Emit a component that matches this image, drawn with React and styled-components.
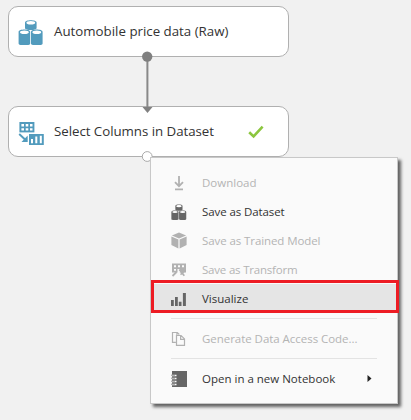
import React from "react";
import styled, { createGlobalStyle } from "styled-components";

const GlobalStyle = createGlobalStyle`
  body { margin: 0; background: #f1f1f1; font-family: "Open Sans", "Noto Sans", sans-serif; }
`;

const Canvas = styled.main`
  position: relative;
  width: 411px;
  height: 420px;
  overflow: hidden;
  background: #f1f1f1;
`;

const Node = styled.section`
  position: absolute;
  left: 8px;
  top: ${(p) => p.$top}px;
  box-sizing: border-box;
  width: 281px;
  height: 51px;
  display: flex;
  align-items: center;
  padding: 0 23px 0 9px;
  border: 1px solid #b0b0b0;
  border-radius: 10px;
  background: #fff;
`;

const NodeIcon = styled.svg`
  flex: none;
  width: 26px;
  height: 27px;
  margin-right: 10px;
`;

const NodeLabel = styled.span`
  flex: 1;
  padding-bottom: 2px;
  white-space: nowrap;
  font-size: 13.3px;
  line-height: 20px;
  letter-spacing: ${(p) => p.$spacing}px;
  color: #333;
`;

const Check = styled.svg`
  flex: none;
  width: 18px;
  height: 16px;
`;

const Wires = styled.svg`
  position: absolute;
  left: 138px;
  top: 48px;
  width: 20px;
  height: 118px;
`;

const Menu = styled.nav`
  position: absolute;
  left: 150px;
  top: 157px;
  box-sizing: border-box;
  width: 248px;
  height: 247px;
  padding-top: 10px;
  border: 1px solid #c8c8c8;
  background: #fafafa;
  box-shadow: 3px 3px 3px rgba(0, 0, 0, 0.6);
`;

const Item = styled.div`
  position: relative;
  display: flex;
  align-items: center;
  height: 29px;
  padding: 0 25px 0 20px;
  background: ${(p) => (p.$active ? "#e5e5e5" : "transparent")};
  color: ${(p) => (p.$disabled ? "#b4b4b4" : "#333")};
`;

const ItemIcon = styled.svg`
  flex: none;
  width: 17px;
  height: 17px;
  margin-right: 14px;
  color: ${(p) => (p.$disabled ? "#b1b1b1" : "#666")};
`;

const ItemLabel = styled.span`
  flex: 1;
  white-space: nowrap;
  font-size: 11.5px;
  line-height: 17px;
  letter-spacing: ${(p) => p.$spacing}px;
`;

const Arrow = styled.svg`
  flex: none;
  width: 5px;
  height: 9px;
`;

const Separator = styled.hr`
  height: 1px;
  margin: 5px 20px;
  border: 0;
  background: #e3e3e3;
`;

const Highlight = styled.div`
  position: absolute;
  left: 0;
  top: -4px;
  box-sizing: border-box;
  width: 248px;
  height: 33px;
  border: 3px solid #ed1c24;
`;

const Cylinders = () => (
  <g>
    {[[7, 2.2, 8], [0.6, 11.6, 14], [13, 11.6, 14]].map(([x, y, h]) => (
      <g key={x}>
        <path
          d={`M${x} ${y + 2.4}c0-3.2 11.6-3.2 11.6 0v${h - 2.6}c0 2.8-11.6 2.8-11.6 0z`}
          fill="currentColor"
        />
        <ellipse cx={x + 5.8} cy={y + 2.6} rx="4.4" ry="1.8" fill="#fff" />
      </g>
    ))}
  </g>
);

const icons = {
  download: (
    <path d="M8 2v10.5M4 8.2l4 4 4-4M4 15.4h8" fill="none" stroke="currentColor" strokeWidth="1.8" />
  ),
  dataset: (
    <g transform="translate(0 .2) scale(.62)">
      <Cylinders />
    </g>
  ),
  model: (
    <g fill="currentColor">
      <path d="M8 .6l7.1 2.8L8 6.4.9 3.4z" />
      <path d="M.4 4.6l7 3v9L.4 13z" />
      <path d="M15.6 4.6l-7 3v9l7-3.6z" />
    </g>
  ),
  transform: (
    <g transform="translate(0 1)">
      <path d="M1 1.5h14v9H1z" fill="currentColor" />
      <path d="M3 3.2h2v2H3zM7 3.2h2v2H7zM11 3.2h2v2h-2zM3 7h2v1.8H3zM6.5 7h2l1 2-1 2h-2z" fill="#fafafa" />
      <path d="M1.5 14l4-4M8.3 7.5l5 6.2" stroke="currentColor" strokeWidth="1.8" />
      <path d="M9.5 12.6l4.6-4" stroke="currentColor" strokeWidth="1.5" />
    </g>
  ),
  bars: (
    <path d="M0 10h2.8v6H0zM4 7h2.8v9H4zM7.8 11.7h2.7V16H7.8zM11.9 3h3v13h-3z" fill="currentColor" />
  ),
  code: (
    <g transform="translate(-.1 .9)" fill="none" stroke="currentColor" strokeWidth="1.2">
      <path d="M5 11.5H1.6V1.6h4.8l2 2M6 1.6v2.6" />
      <path d="M5.6 4.6h4.6l3.4 3.4v6.4h-8zM9.7 4.6v3.9h3.9" />
    </g>
  ),
  notebook: (
    <g>
      <path d="M1 1h15v16H1z" fill="currentColor" />
      <path d="M0 5.5h5.5M0 8.5h5.5M0 11.5h5.5M0 14.5h5.5" stroke="#fafafa" strokeWidth="1.5" />
      <path d="M0 5.2h4M0 8.2h4M0 11.2h4M0 14.2h4" stroke="currentColor" strokeWidth=".7" />
    </g>
  ),
};

function MenuItem({ icon, label, spacing = 0, disabled, active, submenu }) {
  return (
    <Item $disabled={disabled} $active={active}>
      <ItemIcon viewBox="0 0 17 17" $disabled={disabled}>{icons[icon]}</ItemIcon>
      <ItemLabel $spacing={spacing}>{label}</ItemLabel>
      {submenu && (
        <Arrow viewBox="0 0 5 9"><path d="M.5 1v7l4-3.5z" fill="#222" /></Arrow>
      )}
      {active && <Highlight />}
    </Item>
  );
}

export default function App() {
  return (
    <>
      <GlobalStyle />
      <Canvas>
        <Node $top={6}>
          <NodeIcon viewBox="0 0 26 27" color="#529bbd"><Cylinders /></NodeIcon>
          <NodeLabel $spacing={0}>Automobile price data (Raw)</NodeLabel>
        </Node>
        <Node $top={106}>
          <NodeIcon viewBox="0 0 26 27">
            <path d="M1.4 4h15v10.4h-15z" fill="#529bbd" />
            <path d="M3.4 6H6v2.4H3.4zM7.7 6h2.6v2.4H7.7zM12 6h2.5v2.4H12zM3.4 10.2H6v2.4H3.4zM7.7 10.2h2.6v2.4H7.7zM12 10.2h2.5v2.4H12z" fill="#fff" />
            <path d="M1.2 16l6.4 6" stroke="#529bbd" strokeWidth="1.9" />
            <path d="M9.7 17.5v6.6H3.5z" fill="#529bbd" />
            <path d="M11 16h14.8v11H11z" fill="#529bbd" />
            <path d="M13 21h2v4.3h-2zM17.3 18.5h2v6.8h-2zM21.8 17.8h2v7.5h-2z" fill="#fff" />
          </NodeIcon>
          <NodeLabel $spacing={-0.04}>Select Columns in Dataset</NodeLabel>
          <Check viewBox="0 0 18 16">
            <path d="M2.2 8.2l4.4 4.3 9-9.8" fill="none" stroke="#8cc63f" strokeWidth="2.6" />
          </Check>
        </Node>
        <Wires viewBox="0 0 20 118">
          <path d="M9.4 8v52" stroke="#898989" strokeWidth="2" />
          <circle cx="9.2" cy="8.6" r="5.2" fill="#808080" />
          <path d="M4.5 59h10l-5 6z" fill="#808080" />
          <circle cx="9.2" cy="108.5" r="4.9" fill="#fff" stroke="#aaa" />
        </Wires>
        <Menu>
          <MenuItem icon="download" label="Download" disabled />
          <MenuItem icon="dataset" label="Save as Dataset" spacing={-0.1} />
          <MenuItem icon="model" label="Save as Trained Model" spacing={-0.09} disabled />
          <MenuItem icon="transform" label="Save as Transform" spacing={-0.2} disabled />
          <MenuItem icon="bars" label="Visualize" active />
          <Separator />
          <MenuItem icon="code" label="Generate Data Access Code..." spacing={-0.04} disabled />
          <Separator />
          <MenuItem icon="notebook" label="Open in a new Notebook" submenu />
        </Menu>
      </Canvas>
    </>
  );
}
